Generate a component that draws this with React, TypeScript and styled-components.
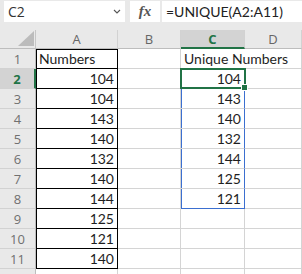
import styled, { createGlobalStyle, css } from "styled-components";

const GlobalStyle = createGlobalStyle`
  html, body {
    margin: 0;
    padding: 0;
    background: #e9e9e9;
  }
  body {
    font-family: "Lato", "Liberation Sans", sans-serif;
  }
`;

const Sheet = styled.div`
  width: 302px;
  height: 274px;
  overflow: hidden;
  background: #e9e9e9;
`;

const FormulaBar = styled.div`
  display: flex;
  height: 30px;
  padding: 1px 0 0 4px;
  box-sizing: border-box;
  gap: 5px;
`;

const NameBox = styled.div`
  width: 121px;
  height: 21px;
  background: #fff;
  display: flex;
  align-items: center;
  justify-content: space-between;
  padding: 0 4px 0 4px;
  box-sizing: border-box;
  font-family: "Open Sans", "Liberation Sans", sans-serif;
  font-size: 14px;
  color: #333;
`;

const FxBox = styled.div`
  width: 30px;
  height: 21px;
  background: #fff;
  display: flex;
  align-items: center;
  justify-content: center;
  font-family: "Liberation Serif", serif;
  font-style: italic;
  font-weight: 700;
  font-size: 15px;
  color: #555;
`;

const FormulaInput = styled.div`
  flex: 1;
  height: 21px;
  margin-left: -3px;
  background: #fff;
  display: flex;
  align-items: center;
  padding-left: 4px;
  font-family: "Lato", "Liberation Sans", sans-serif;
  font-size: 14px;
  color: #222;
`;

const Grid = styled.div`
  display: grid;
  grid-template-columns: 36px 82px 63px 64px 57px;
  grid-template-rows: 19px repeat(12, 20px);
  background: #fff;
`;

const Corner = styled.div`
  background: #e9e9e9;
  border-right: 1px solid #c6c6c6;
  border-bottom: 1px solid #bdbdbd;
  display: flex;
  align-items: flex-end;
  justify-content: flex-end;
  padding: 0 1px 2px 0;
`;

const ColHeader = styled.div<{ $active?: boolean }>`
  background: #e9e9e9;
  border-right: 1px solid #d2d2d2;
  border-bottom: 1px solid #bdbdbd;
  display: flex;
  align-items: center;
  justify-content: center;
  font-family: "Open Sans", "Liberation Sans", sans-serif;
  font-size: 13px;
  color: #666;
  ${(p) =>
    p.$active &&
    css`
      background: #d3d3d3;
      color: #217346;
      font-weight: 700;
      border-bottom: 2px solid #217346;
    `}
`;

const RowHeader = styled.div<{ $active?: boolean }>`
  background: #e9e9e9;
  border-right: 1px solid #bdbdbd;
  border-bottom: 1px solid #d2d2d2;
  display: flex;
  align-items: center;
  justify-content: center;
  font-family: "Open Sans", "Liberation Sans", sans-serif;
  font-size: 13px;
  color: #707070;
  ${(p) =>
    p.$active &&
    css`
      background: #d3d3d3;
      color: #217346;
      font-weight: 700;
      border-right: 2px solid #217346;
    `}
`;

const Cell = styled.div<{
  $align?: "left" | "right";
  $boxed?: boolean;
  $top?: boolean;
  $spill?: "top" | "mid" | "bottom";
  $overflow?: boolean;
  $selected?: boolean;
}>`
  position: relative;
  box-sizing: border-box;
  border-right: 1px solid #d4d4d4;
  border-bottom: 1px solid #d4d4d4;
  display: flex;
  align-items: flex-end;
  justify-content: ${(p) => (p.$align === "right" ? "flex-end" : "flex-start")};
  padding: 0 3px 1px 3px;
  font-size: 14px;
  color: #1e1e1e;
  white-space: nowrap;
  ${(p) =>
    p.$boxed &&
    css`
      border-right: 1px solid #000;
      border-bottom: 1px solid #000;
      box-shadow: inset 1px ${p.$top ? "1px" : "0"} 0 #000;
    `}
  ${(p) =>
    p.$spill &&
    css`
      border-right: 1px solid #3b6fd0;
      box-shadow: inset 1px 0 0 #3b6fd0;
      ${p.$spill === "bottom" &&
      css`
        border-bottom: 1px solid #3b6fd0;
      `}
    `}
  ${(p) =>
    p.$overflow &&
    css`
      border-right-color: transparent;
      overflow: visible;
      z-index: 1;
    `}
  ${(p) =>
    p.$selected &&
    css`
      z-index: 2;
      &::after {
        content: "";
        position: absolute;
        left: -1px;
        top: -1px;
        right: -2px;
        bottom: -1px;
        border: 2px solid #217346;
      }
      &::before {
        content: "";
        position: absolute;
        right: -4px;
        bottom: -3px;
        width: 5px;
        height: 5px;
        background: #217346;
        border: 1px solid #fff;
        z-index: 3;
      }
    `}
`;

const columnA = ["Numbers", "104", "104", "143", "140", "132", "140", "144", "125", "121", "140", ""];
const columnC = ["Unique Numbers", "104", "143", "140", "132", "144", "125", "121", "", "", "", ""];

function Chevron() {
  return (
    <svg width="8" height="5" viewBox="0 0 8 5">
      <path d="M1 1 L4 4 L7 1" fill="none" stroke="#555" strokeWidth="1.1" />
    </svg>
  );
}

function CornerTriangle() {
  return (
    <svg width="16" height="15" viewBox="0 0 16 15">
      <polygon points="16,0 16,15 0,15" fill="#bcbcbc" />
    </svg>
  );
}

export default function App() {
  return (
    <Sheet>
      <GlobalStyle />
      <FormulaBar>
        <NameBox>
          <span>C2</span>
          <Chevron />
        </NameBox>
        <FxBox>fx</FxBox>
        <FormulaInput>=UNIQUE(A2:A11)</FormulaInput>
      </FormulaBar>
      <Grid>
        <Corner>
          <CornerTriangle />
        </Corner>
        <ColHeader>A</ColHeader>
        <ColHeader>B</ColHeader>
        <ColHeader $active>C</ColHeader>
        <ColHeader>D</ColHeader>
        {columnA.map((a, i) => {
          const row = i + 1;
          const c = columnC[i];
          const spill =
            row >= 2 && row <= 8 ? (row === 8 ? "bottom" : row === 2 ? "top" : "mid") : undefined;
          return [
            <RowHeader key={`h${row}`} $active={row === 2}>
              {row <= 11 ? row : ""}
            </RowHeader>,
            <Cell
              key={`a${row}`}
              $align={row === 1 ? "left" : "right"}
              $boxed={row <= 11}
              $top={row === 1}
            >
              {a}
            </Cell>,
            <Cell key={`b${row}`} />,
            <Cell
              key={`c${row}`}
              $align={row === 1 ? "left" : "right"}
              $spill={spill as "top" | "mid" | "bottom" | undefined}
              $overflow={row === 1}
              $selected={row === 2}
            >
              {c}
            </Cell>,
            <Cell key={`d${row}`} />,
          ];
        })}
      </Grid>
    </Sheet>
  );
}
